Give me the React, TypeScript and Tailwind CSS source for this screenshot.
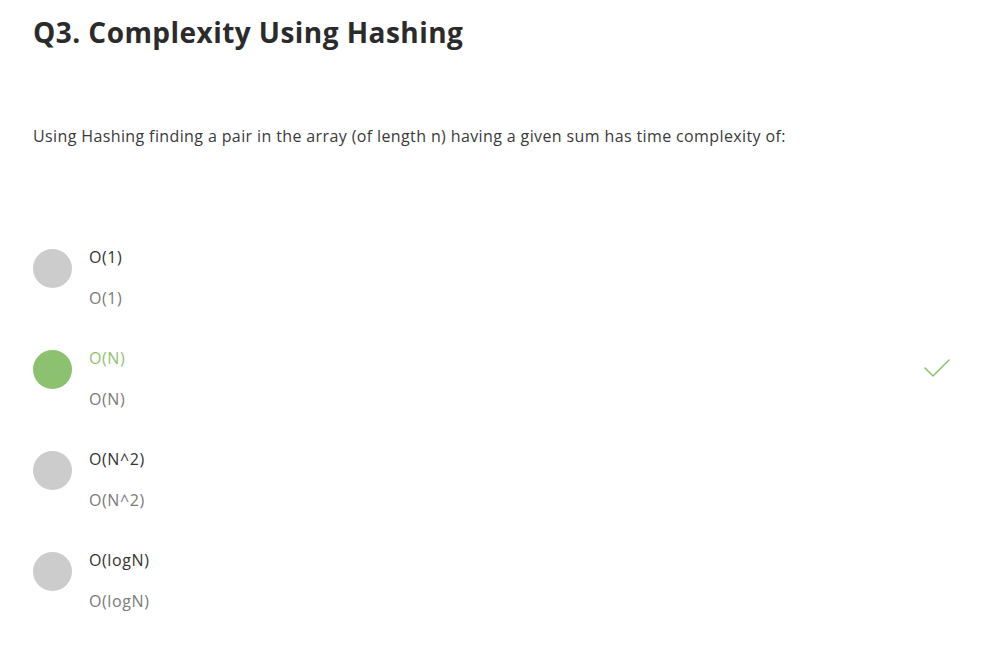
import React from 'react';

interface Option {
  label: string;
  correct?: boolean;
}

const options: Option[] = [
  { label: 'O(1)' },
  { label: 'O(N)', correct: true },
  { label: 'O(N^2)' },
  { label: 'O(logN)' },
];

const CheckMark = () => (
  <svg width="28" height="22" viewBox="0 0 28 22" fill="none">
    <path d="M2 11 L10 19 L26 3" stroke="#8dc26f" strokeWidth="1.6" strokeLinecap="round" strokeLinejoin="round" />
  </svg>
);

const App: React.FC = () => {
  return (
    <div className="w-[989px] h-[662px] bg-white px-[33px] pt-[14px] font-['Open_Sans',sans-serif]">
      <h1 className="text-[28px] leading-[36px] font-bold text-[#2b2b2b] tracking-[0.45px]">
        Q3. Complexity Using Hashing
      </h1>

      <p className="mt-[74px] text-[16px] leading-[24px] text-[#3a3a3a] tracking-[0.38px]">
        Using Hashing finding a pair in the array (of length n) having a given sum has time complexity of:
      </p>

      <div className="mt-[97px] flex flex-col">
        {options.map((opt) => (
          <div key={opt.label} className="flex items-start h-[101px]">
            <div
              className={`w-[39px] h-[39px] rounded-full mt-[4px] shrink-0 ${
                opt.correct ? 'bg-[#8bc16f]' : 'bg-[#cccccc]'
              }`}
            />
            <div className="ml-[17px] flex flex-col text-[16px] leading-[24px] tracking-[0.6px]">
              <span className={opt.correct ? 'text-[#8dc26f]' : 'text-[#333333]'}>{opt.label}</span>
              <span className="mt-[17px] text-[#7a7a7a]">{opt.label}</span>
            </div>
            {opt.correct && (
              <div className="ml-auto mr-[5px] mt-[11px]">
                <CheckMark />
              </div>
            )}
          </div>
        ))}
      </div>
    </div>
  );
};

export default App;
